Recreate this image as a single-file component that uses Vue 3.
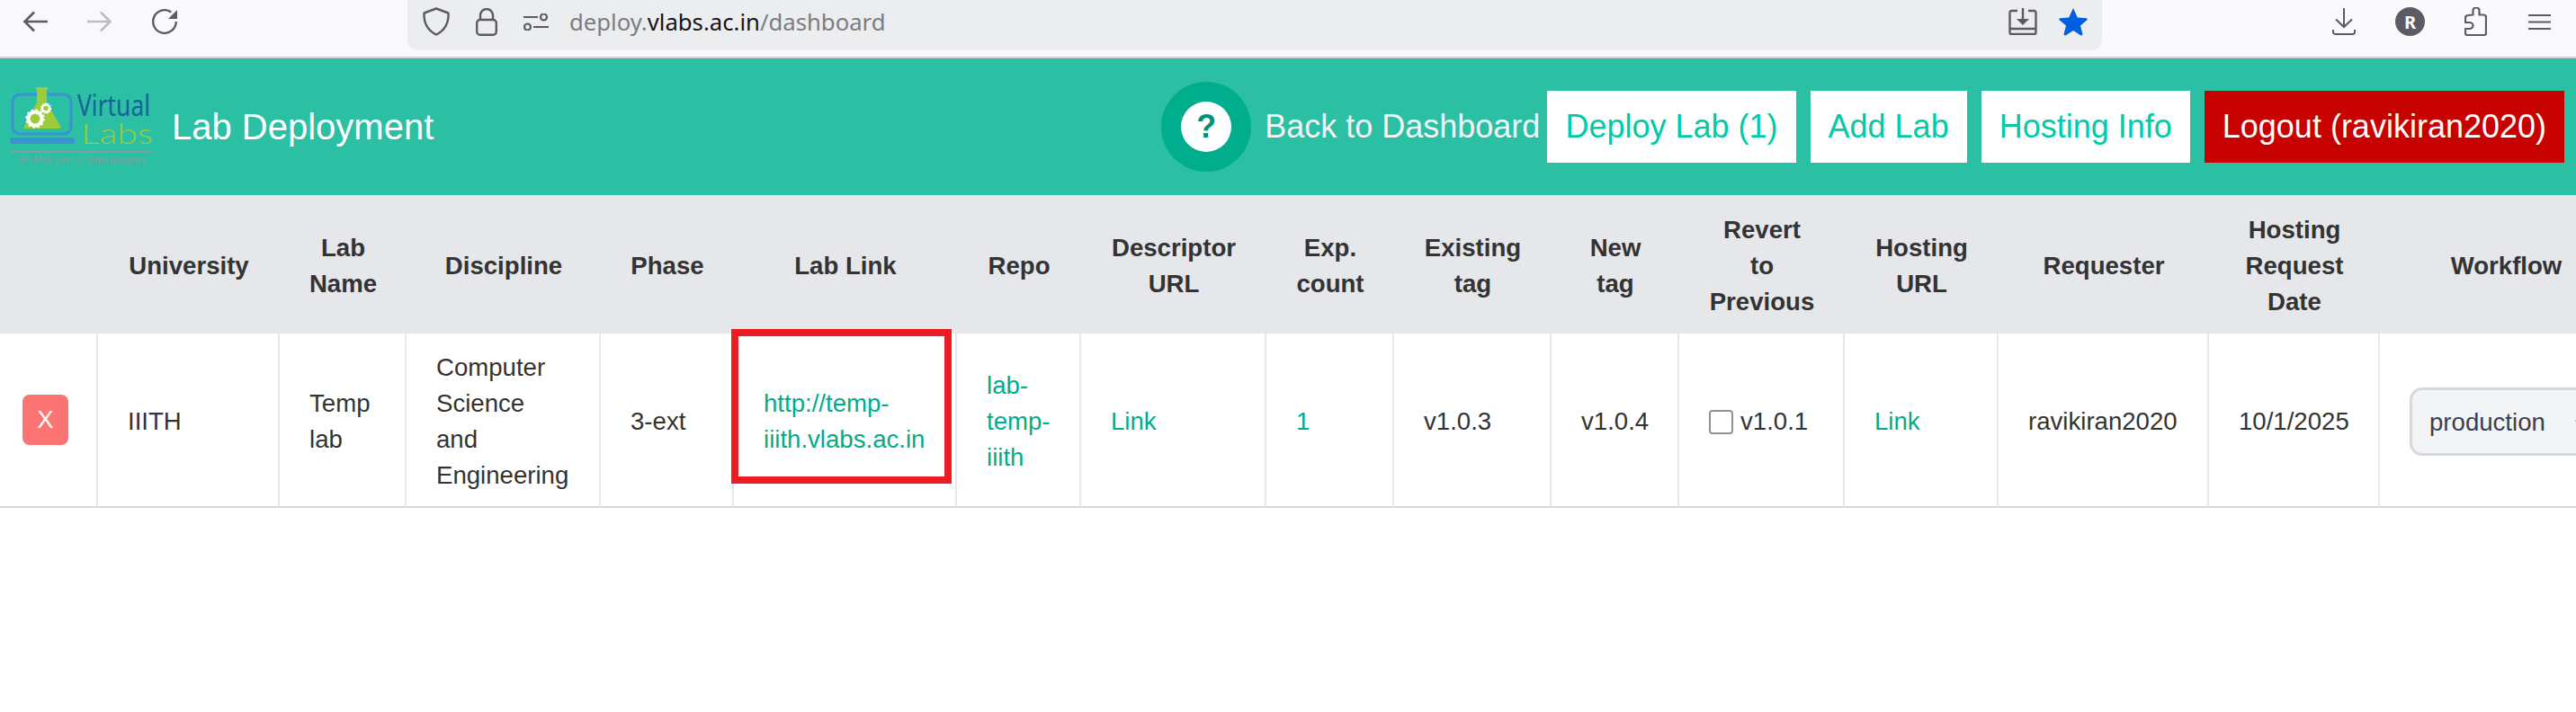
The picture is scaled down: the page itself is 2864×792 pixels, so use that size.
<template>
  <div class="page">
    <div class="browser">
      <div class="nav-icons">
        <svg width="28" height="24" viewBox="0 0 28 24" fill="none" stroke="#5b5b66" stroke-width="2.600">
          <path d="M28 12H3M13 1.500 2.500 12 13 22.500" />
        </svg>
        <svg width="28" height="24" viewBox="0 0 28 24" fill="none" stroke="#bdbdc4" stroke-width="2.600">
          <path d="M0 12h25M15 1.500 25.500 12 15 22.500" />
        </svg>
        <svg width="28" height="28" viewBox="0 0 28 28" fill="none">
          <path d="M21.300 3.500A12.800 12.800 0 1 0 26.800 14" stroke="#5b5b66" stroke-width="2.400" />
          <path d="M28 1V11H18z" fill="#5b5b66" />
        </svg>
      </div>

      <div class="urlbar">
        <svg width="30" height="32" viewBox="0 0 30 32" fill="none" stroke="#5b5b66" stroke-width="2.400">
          <path d="M15 1.500 28.500 6.500c.5 11-3.500 19-13.500 24C5 25.500 1 17.500 1.500 6.500z" stroke-linejoin="round" />
        </svg>
        <svg width="24" height="31" viewBox="0 0 24 31" fill="none" stroke="#5b5b66" stroke-width="2.400">
          <path d="M5 13V8a7 7 0 0 1 14 0v5" />
          <rect x="1.200" y="13" width="21.600" height="16.800" rx="3.500" />
        </svg>
        <svg width="28" height="19" viewBox="0 0 28 19" fill="none" stroke="#5b5b66" stroke-width="2.200">
          <path d="M0 4h16M11 15h17" />
          <circle cx="22.500" cy="4" r="3.500" />
          <circle cx="4.500" cy="15" r="3.500" />
        </svg>
        <span class="url">deploy.<b>vlabs.ac.in</b>/dashboard</span>
        <svg class="pocket" width="32" height="30" viewBox="0 0 32 30" fill="none" stroke="#5b5b66" stroke-width="2.400">
          <path d="M10 3H3.500a2 2 0 0 0-2 2v22a2 2 0 0 0 2 2h25a2 2 0 0 0 2-2V5a2 2 0 0 0-2-2H22M1.500 23h29M16 0v13" />
          <path d="M9 12h14l-7 7z" fill="#5b5b66" stroke="none" />
        </svg>
        <svg width="32" height="31" viewBox="0 0 32 31" fill="#0060df">
          <path d="M16 0l4.800 10.500 9.800.8c1.200.2 1.500 1.200.8 1.900l-7.400 6.300 2.400 9.300c.2 1.200-1 2-2.200 1.400L16 25l-8.200 5.200c-1.200.6-2.400-.2-2.200-1.400l2.400-9.300-7.400-6.300c-.7-.7-.4-1.700.8-1.900l9.800-.8z" />
        </svg>
      </div>

      <div class="tool-icons">
        <svg width="26" height="30" viewBox="0 0 26 30" fill="none" stroke="#5b5b66" stroke-width="2">
          <path d="M13 0v21M4 12.500l9 8.500 9-8.500M1 24v2.500A2.500 2.500 0 0 0 3.500 29h19a2.500 2.500 0 0 0 2.500-2.500V24" />
        </svg>
        <span class="avatar">R</span>
        <svg width="25" height="32" viewBox="0 0 25 32" fill="none" stroke="#5b5b66" stroke-width="2.200">
          <path d="M9.500 8.500V3.500a3.500 3 0 0 1 7 0v5h4.500a3 2.500 0 0 1 3 2.500v18a2 2 0 0 1-2 2H3a2 2 0 0 1-2-2v-5h4.500a4 3.500 0 0 0 0-7H1v-5a3 3 0 0 1 3-3z" stroke-linejoin="round" />
        </svg>
        <svg class="menu" width="25" height="19" viewBox="0 0 25 19" fill="none" stroke="#5b5b66" stroke-width="2.200">
          <path d="M0 2h25M0 9.500h25M0 17h25" />
        </svg>
      </div>
    </div>

    <header class="topbar">
      <svg class="logo" width="172" height="96" viewBox="0 0 172 96">
        <rect x="14" y="9" width="65" height="44" rx="8" fill="none" stroke="#3a92d0" stroke-width="3" />
        <rect x="11" y="57" width="72" height="7" rx="3" fill="#3a92d0" />
        <path d="M40 1h13v3h-1v14l15 26c1 2 0 3-2 3H29c-2 0-3-1-2-3l14-26V4h-1z" fill="#9ccb3b" />
        <circle cx="39" cy="36" r="7.500" fill="none" stroke="#fff" stroke-width="4" />
        <circle cx="39" cy="36" r="9.500" fill="none" stroke="#fff" stroke-width="2.500" stroke-dasharray="2.500 2.500" />
        <circle cx="51" cy="24.500" r="4" fill="none" stroke="#fff" stroke-width="2.500" />
        <circle cx="51" cy="24.500" r="5.500" fill="none" stroke="#fff" stroke-width="1.500" stroke-dasharray="1.500 1.500" />
        <text x="86" y="33" class="logo-virtual" textLength="81" lengthAdjust="spacingAndGlyphs">Virtual</text>
        <text x="90" y="64" class="logo-labs" textLength="80" lengthAdjust="spacingAndGlyphs">Labs</text>
        <rect x="12" y="72" width="158" height="1.500" fill="#8b9c9c" />
        <text x="22" y="85" class="logo-tag" textLength="140" lengthAdjust="spacingAndGlyphs">An MoE Govt of India Initiative</text>
      </svg>
      <h1 class="title">Lab Deployment</h1>

      <nav class="links">
        <a class="back">
          <span class="help"><span class="help-dot">?</span></span>
          Back to Dashboard
        </a>
        <a class="btn deploy">Deploy Lab (1)</a>
        <a class="btn">Add Lab</a>
        <a class="btn">Hosting Info</a>
        <a class="btn logout">Logout (ravikiran2020)</a>
      </nav>
    </header>

    <div class="table-wrap">
      <table>
        <colgroup>
          <col v-for="w in columnWidths" :key="w.id" :style="{ width: w.px + 'px' }" />
        </colgroup>
        <thead>
          <tr>
            <th></th>
            <th>University</th>
            <th>Lab<br />Name</th>
            <th>Discipline</th>
            <th>Phase</th>
            <th>Lab Link</th>
            <th>Repo</th>
            <th>Descriptor<br />URL</th>
            <th>Exp.<br />count</th>
            <th>Existing<br />tag</th>
            <th>New<br />tag</th>
            <th>Revert<br />to<br />Previous</th>
            <th>Hosting<br />URL</th>
            <th>Requester</th>
            <th>Hosting<br />Request<br />Date</th>
            <th>Workflow</th>
          </tr>
        </thead>
        <tbody>
          <tr>
            <td class="remove-cell"><button class="remove" type="button">X</button></td>
            <td>IIITH</td>
            <td>Temp lab</td>
            <td>Computer<br />Science<br />and<br />Engineering</td>
            <td>3-ext</td>
            <td class="link-cell">
              <a>http://temp-iiith.vlabs.ac.in</a>
              <span class="highlight"></span>
            </td>
            <td><a>lab-temp-iiith</a></td>
            <td><a>Link</a></td>
            <td><a>1</a></td>
            <td>v1.0.3</td>
            <td>v1.0.4</td>
            <td class="revert-cell">
              <label class="revert"><input type="checkbox" /> v1.0.1</label>
            </td>
            <td><a>Link</a></td>
            <td>ravikiran2020</td>
            <td>10/1/2025</td>
            <td>
              <select class="workflow">
                <option>production</option>
                <option>testing</option>
              </select>
            </td>
          </tr>
        </tbody>
      </table>
    </div>
  </div>
</template>

<script setup>
const columnWidths = [109, 202, 141, 216, 148, 248, 138, 206, 142, 175, 142, 184, 171, 234, 190, 281].map(
  (px, id) => ({ id, px })
);
</script>

<style scoped>
.page {
  width: 2864px;
  height: 792px;
  overflow: hidden;
  background: #fff;
  font-family: "Liberation Sans", Arial, sans-serif;
  color: #333;
}

.browser {
  display: grid;
  grid-template-columns: 453px 1884px 1fr;
  height: 65px;
  box-sizing: border-box;
  background: #f9f9fb;
  border-bottom: 2px solid #cfcfd8;
}

.browser svg {
  display: block;
  flex: none;
}

.nav-icons {
  display: flex;
  align-items: center;
  gap: 44px;
  height: 48px;
  padding-left: 25px;
}

.urlbar {
  display: flex;
  align-items: center;
  height: 56px;
  box-sizing: border-box;
  padding: 0 16px 8px 17px;
  background: #ecedef;
  border-radius: 0 0 12px 12px;
  gap: 29px;
}

.url {
  margin-left: -6px;
  font-family: "Noto Sans", sans-serif;
  font-size: 25.700px;
  color: #7c7c82;
}

.url b {
  font-weight: 400;
  color: #15141a;
}

.pocket {
  margin-left: auto;
  margin-right: -5px;
}

.tool-icons {
  display: flex;
  align-items: center;
  gap: 44px;
  height: 48px;
  padding-left: 256px;
}

.menu {
  margin-left: 2px;
}

.avatar {
  display: grid;
  place-items: center;
  width: 33px;
  height: 32px;
  border-radius: 50%;
  background: #5b5b66;
  color: #fff;
  font-family: "Noto Sans", sans-serif;
  font-size: 20px;
  font-weight: 700;
}

.topbar {
  display: flex;
  align-items: center;
  height: 152px;
  background: #2bbfa4;
}

.logo {
  flex: none;
  margin-top: 6px;
  margin-right: 19px;
}

.logo-virtual {
  font-family: "Noto Sans", sans-serif;
  font-size: 32px;
  fill: #17639b;
}

.logo-labs {
  font-family: Lato, "Noto Sans", sans-serif;
  font-size: 31px;
  font-weight: 300;
  fill: #9ccb3b;
}

.logo-tag {
  font-family: "Noto Sans", sans-serif;
  font-size: 10.500px;
  fill: #8b9c9c;
}

.title {
  margin: 0;
  font-size: 40px;
  font-weight: 400;
  color: #fff;
}

.links {
  display: flex;
  align-items: center;
  gap: 16px;
  margin-left: auto;
  padding-right: 13px;
  font-size: 36px;
}

.back {
  display: flex;
  align-items: center;
  gap: 15px;
  margin-right: -8px;
  color: #f3f4f6;
  text-decoration: none;
}

.help {
  display: grid;
  place-items: center;
  width: 100px;
  height: 100px;
  border-radius: 50%;
  background: #00ad8d;
}

.help-dot {
  display: grid;
  place-items: center;
  width: 56px;
  height: 56px;
  border-radius: 50%;
  background: #fff;
  color: #00937a;
  font-size: 36px;
  font-weight: 700;
}

.btn {
  display: flex;
  align-items: center;
  height: 80px;
  padding: 0 20px;
  background: #fff;
  color: #00cba6;
  text-decoration: none;
}

.btn.logout {
  background: #c70000;
  color: #fff;
}

.table-wrap {
  overflow: hidden;
}

table {
  width: 2912px;
  table-layout: fixed;
  border-collapse: separate;
  border-spacing: 0;
  font-size: 27.600px;
  line-height: 40px;
}

th {
  height: 154px;
  box-sizing: border-box;
  padding: 4px 0 0;
  background: #e5e7eb;
  color: #333;
  font-weight: 700;
  text-align: center;
}

td {
  height: 194px;
  box-sizing: border-box;
  padding: 4px 33px 0;
  border-right: 2px solid #e5e7eb;
  border-bottom: 2px solid #d5d8dc;
  color: #333;
}

td:last-child {
  border-right: 0;
}

a {
  color: #00ac8a;
}

td.remove-cell {
  padding: 0 0 0 25px;
}

.remove {
  display: block;
  width: 51px;
  height: 56px;
  padding: 0;
  border: 0;
  border-radius: 8px;
  background: #fb7373;
  color: #fff;
  font: inherit;
}

.link-cell {
  position: relative;
}

.highlight {
  position: absolute;
  top: -5px;
  left: -3px;
  width: 245px;
  height: 172px;
  box-sizing: border-box;
  border: 8px solid #ec1c24;
}

td.revert-cell {
  padding-right: 0;
}

.revert {
  display: flex;
  align-items: center;
  gap: 8px;
}

.revert input {
  flex: none;
  width: 27px;
  height: 27px;
  margin: 0;
  appearance: none;
  border: 2.500px solid #8f8f9d;
  border-radius: 4px;
  background: #fff;
}

.workflow {
  width: 200px;
  height: 76px;
  padding: 0 0 0 15px;
  border: 3px solid #d5d8dc;
  border-radius: 14px;
  background: #f3f4f6;
  color: #374151;
  font: inherit;
}
</style>
